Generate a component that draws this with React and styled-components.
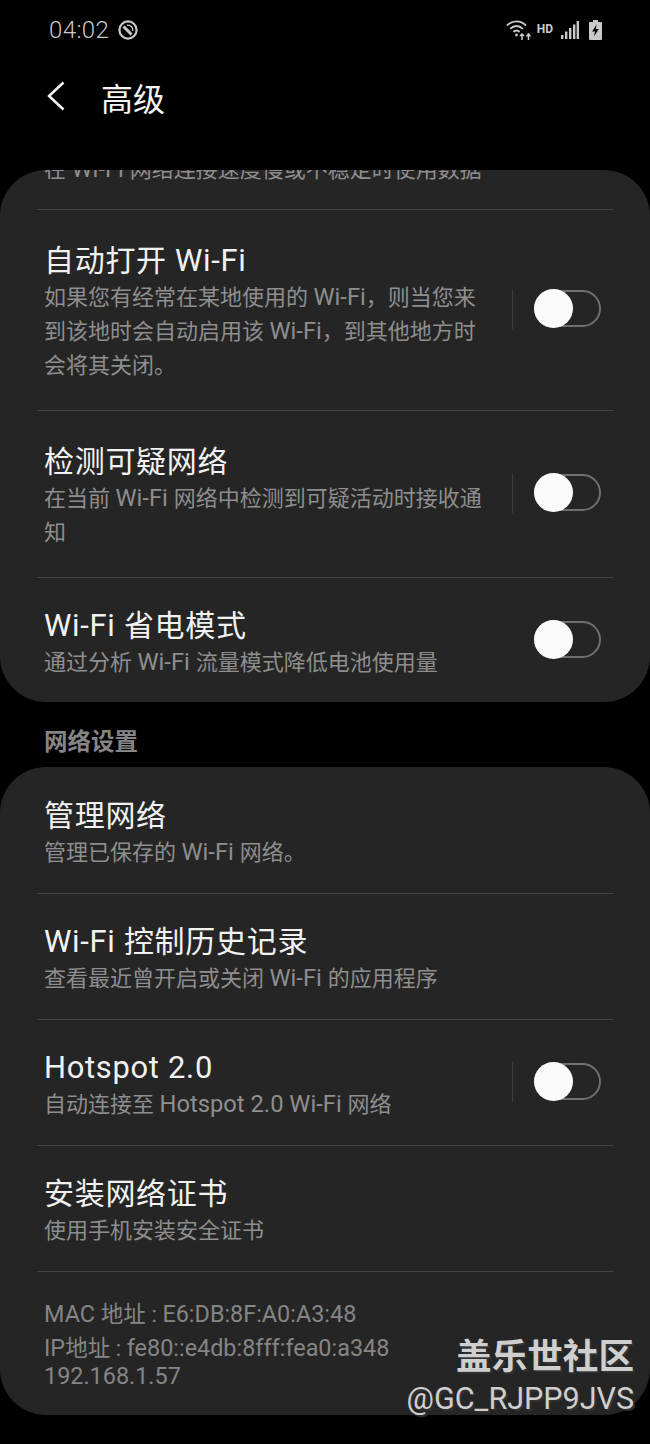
import React from 'react';
import styled, { createGlobalStyle } from 'styled-components';

const GlobalStyle = createGlobalStyle`
  html, body {
    margin: 0;
    padding: 0;
    background: #000;
  }
  body {
    font-family: Roboto, "Noto Sans CJK SC", sans-serif;
  }
`;

const Page = styled.div`
  position: relative;
  width: 650px;
  height: 1444px;
  overflow: hidden;
  background: #000;
`;

const StatusBar = styled.div`
  height: 60px;
  display: flex;
  align-items: center;
  padding: 0 48px 0 49px;
  color: #c9c9c9;
`;

const Clock = styled.span`
  font-size: 24px;
  font-weight: 300;
  letter-spacing: 0.4px;
`;

const StatusLeft = styled.div`
  display: flex;
  align-items: center;
  gap: 8px;
`;

const StatusRight = styled.div`
  margin-left: auto;
  display: flex;
  align-items: center;
`;

const HdLabel = styled.span`
  font-size: 12px;
  font-weight: 700;
  margin: -3px 8px 0 5px;
`;

const BatterySvg = styled.svg`
  margin-left: 10px;
`;

const Header = styled.div`
  height: 110px;
  box-sizing: border-box;
  padding: 21px 0 0 46px;
  display: flex;
  align-items: flex-start;
  gap: 35px;
`;

const HeaderTitle = styled.h1`
  margin: 0;
  font-size: 32px;
  font-weight: 400;
  line-height: 38px;
  color: #f5f5f5;
`;

const Panel = styled.div`
  background: #252525;
  border-radius: 46px;
  overflow: hidden;
  padding-top: ${p => p.$inset || 0}px;
`;

const Row = styled.div`
  margin: 0 37px;
  padding: ${p => (p.$multi ? '33px 12px 27px 7px' : `30px 12px ${p.$last ? 22 : 23}px 7px`)};
  display: flex;
  align-items: center;
  border-bottom: ${p => (p.$last ? 'none' : '1px solid #454545')};
`;

const ClippedRow = styled.div`
  margin: -17px 37px 0;
  padding: 0 12px 22px 7px;
  border-bottom: 1px solid #454545;
`;

const RowText = styled.div`
  flex: 1;
  min-width: 0;
`;

// latin runs are set a little larger than the CJK around them
const Latin = styled.span`
  font-size: 1.08em;
  line-height: 1;
`;

const RowTitle = styled.div`
  font-size: 30px;
  line-height: 36px;
  letter-spacing: 0.7px;
  margin-bottom: 2px;
  color: #f2f2f2;

  ${Latin} {
    font-size: 1.03em;
  }
`;

const Summary = styled.div`
  font-size: 22px;
  line-height: 34px;
  color: #8e8e8e;
`;

const SwitchArea = styled.div`
  flex: none;
  display: flex;
  align-items: center;
  margin: 0 0 9px 22px;
  height: 40px;
`;

const SwitchDivider = styled.div`
  width: 1px;
  height: 40px;
  background: #3d3d3d;
  margin-right: 21px;
`;

const Track = styled.div`
  position: relative;
  width: 67px;
  height: 37px;
  box-sizing: border-box;
  border: 2px solid #6f6f6f;
  border-radius: 19px;
`;

const Thumb = styled.div`
  position: absolute;
  left: -2px;
  top: -3px;
  width: 39px;
  height: 39px;
  border-radius: 50%;
  background: #fafafa;
`;

const SectionLabel = styled.div`
  font-size: 23.5px;
  font-weight: 700;
  line-height: 34px;
  color: #858585;
  padding: 23px 0 8px 44px;
`;

const InfoBlock = styled.div`
  padding: 28px 44px 25px;
  font-size: 22.5px;
  line-height: 28px;
  color: #858585;

  ${Latin} {
    font-size: 1.04em;
  }
`;

const InfoLine = styled.div`
  margin-bottom: 6px;
`;

const Watermark = styled.div`
  position: absolute;
  right: 16px;
  top: 1335px;
  text-align: right;
  color: #cfcfcf;
  text-shadow: 2px 2px 1px #333;
`;

const WatermarkTitle = styled.div`
  font-size: 35.6px;
  font-weight: 700;
  line-height: 44px;
`;

const WatermarkUser = styled.div`
  font-size: 30.5px;
  line-height: 40px;
`;

const SyncIcon = () => (
  <svg width="22" height="22" viewBox="0 0 22 22" fill="none" stroke="currentColor">
    <circle cx="11" cy="11" r="8.6" strokeWidth="2.2" />
    <path d="M6.5 7.5L14.5 15.5" strokeWidth="3" />
    <path d="M10 6.2A5 5 0 0 1 15.8 12" strokeWidth="1.4" />
  </svg>
);

const WifiIcon = () => (
  <svg width="26" height="22" viewBox="0 0 26 22" fill="none" stroke="currentColor" strokeWidth="1.9">
    <path d="M1 6.5C6.5 1 14.5 1 20 6.5" />
    <path d="M4.2 9.8C8 6 13 6 16.8 9.8" />
    <path d="M7.4 13C9.2 11 11.8 11 13.6 13" />
    <circle cx="10.5" cy="16" r="1.4" fill="currentColor" stroke="none" />
    <path d="M16 21V15M14 17L16 15L18 17M22.5 15V21" strokeWidth="1.5" />
    <path d="M20.5 17.5L22.5 15L24.5 17.5" strokeWidth="1.5" />
  </svg>
);

const SignalIcon = () => (
  <svg width="18" height="18" viewBox="0 0 18 18" fill="currentColor">
    <rect x="0" y="14" width="2.4" height="4" />
    <rect x="4" y="10.5" width="2.4" height="7.5" />
    <rect x="8" y="7" width="2.4" height="11" />
    <rect x="12" y="3.5" width="2.4" height="14.5" />
    <rect x="15.6" y="0" width="2.4" height="18" />
  </svg>
);

const BatteryIcon = () => (
  <BatterySvg width="13" height="20" viewBox="0 0 13 20">
    <path d="M4 0H9V2H12A1 1 0 0 1 13 3V19A1 1 0 0 1 12 20H1A1 1 0 0 1 0 19V3A1 1 0 0 1 1 2H4Z" fill="#c9c9c9" />
    <path d="M7.6 4.5L3.2 11.5H6L5 16.5L9.8 9H6.8Z" fill="#000" />
  </BatterySvg>
);

const BackIcon = () => (
  <svg width="20" height="30" viewBox="0 0 20 30" fill="none" stroke="#f5f5f5" strokeWidth="2.5">
    <path d="M17.5 1.5L3 15L17.5 28.5" />
  </svg>
);

// wraps every latin run of a mixed string
const mixed = text =>
  text.split(/([A-Za-z0-9][A-Za-z0-9 .:_-]*)/).map((part, i) =>
    i % 2 ? <Latin key={i}>{part}</Latin> : part
  );

const Switch = ({ divider }) => (
  <SwitchArea>
    {divider && <SwitchDivider />}
    <Track>
      <Thumb />
    </Track>
  </SwitchArea>
);

const SettingRow = ({ title, summary, multi, toggle, divider, last }) => (
  <Row $multi={multi} $last={last}>
    <RowText>
      <RowTitle>{mixed(title)}</RowTitle>
      <Summary>{mixed(summary)}</Summary>
    </RowText>
    {toggle && <Switch divider={divider} />}
  </Row>
);

export default function App() {
  return (
    <Page>
      <GlobalStyle />
      <StatusBar>
        <StatusLeft>
          <Clock>04:02</Clock>
          <SyncIcon />
        </StatusLeft>
        <StatusRight>
          <WifiIcon />
          <HdLabel>HD</HdLabel>
          <SignalIcon />
          <BatteryIcon />
        </StatusRight>
      </StatusBar>
      <Header>
        <BackIcon />
        <HeaderTitle>高级</HeaderTitle>
      </Header>
      <Panel>
        <ClippedRow>
          <Summary>{mixed('在 Wi-Fi 网络连接速度慢或不稳定时使用数据')}</Summary>
        </ClippedRow>
        <SettingRow
          multi
          toggle
          divider
          title="自动打开 Wi-Fi"
          summary="如果您有经常在某地使用的 Wi-Fi，则当您来到该地时会自动启用该 Wi-Fi，到其他地方时会将其关闭。"
        />
        <SettingRow
          multi
          toggle
          divider
          title="检测可疑网络"
          summary="在当前 Wi-Fi 网络中检测到可疑活动时接收通知"
        />
        <SettingRow
          toggle
          last
          title="Wi-Fi 省电模式"
          summary="通过分析 Wi-Fi 流量模式降低电池使用量"
        />
      </Panel>
      <SectionLabel>网络设置</SectionLabel>
      <Panel $inset={1}>
        <SettingRow title="管理网络" summary="管理已保存的 Wi-Fi 网络。" />
        <SettingRow title="Wi-Fi 控制历史记录" summary="查看最近曾开启或关闭 Wi-Fi 的应用程序" />
        <SettingRow toggle divider title="Hotspot 2.0" summary="自动连接至 Hotspot 2.0 Wi-Fi 网络" />
        <SettingRow title="安装网络证书" summary="使用手机安装安全证书" />
        <InfoBlock>
          <InfoLine>{mixed('MAC 地址 : E6:DB:8F:A0:A3:48')}</InfoLine>
          <div>{mixed('IP地址 : fe80::e4db:8fff:fea0:a348')}</div>
          <div>{mixed('192.168.1.57')}</div>
        </InfoBlock>
      </Panel>
      <Watermark>
        <WatermarkTitle>盖乐世社区</WatermarkTitle>
        <WatermarkUser>@GC_RJPP9JVS</WatermarkUser>
      </Watermark>
    </Page>
  );
}
